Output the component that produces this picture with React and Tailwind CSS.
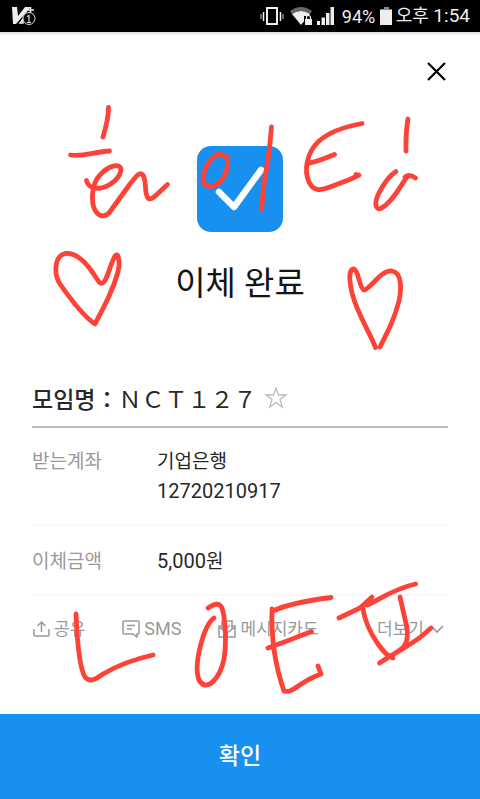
const koreanFont = "font-['Roboto','Noto_Sans_CJK_KR',sans-serif]";

function VaccineIcon() {
  return (
    <svg className="h-6 w-7" viewBox="0 0 28 24" fill="none" aria-hidden="true">
      <path d="M0 3h5l1 9 7-9h6L4 20H1L0 3Z" fill="#eee" />
      <path d="M15 6h7M18.500 3v6M8 19l3-4v4Z" stroke="#eee" strokeWidth="1.500" />
      <circle cx="17" cy="14.500" r="6" fill="#000" stroke="#ddd" />
      <path d="m15 12.500 2-1v7M15 18.500h4" stroke="#ddd" strokeWidth="1.200" />
    </svg>
  );
}

function VibrateIcon() {
  return (
    <svg className="h-6 w-6" viewBox="0 0 24 24" fill="none" stroke="#eee" aria-hidden="true">
      <path d="M7 4h10v16H7Z" strokeWidth="2" />
      <path d="M3.500 8v9M20.500 8v9" strokeWidth="1.500" />
      <path d="M1 10v5M23 10v5" stroke="#aaa" strokeWidth="1.200" />
    </svg>
  );
}

function WifiIcon() {
  return (
    <svg className="h-6 w-6" viewBox="0 0 24 24" aria-hidden="true">
      <path d="M0 7q11-8 22 0l-2 3q-9-6-18 0Z" fill="#666" />
      <path d="M2 10q9-6 18 0l-9 11Z" fill="#eee" />
      <path d="M14 12h9v10h-9Z" fill="#000" />
      <path d="M15 15h7v6h-7Z" fill="#eee" />
      <path d="M16.500 15v-1.500a2 2 0 0 1 4 0V15" fill="none" stroke="#eee" strokeWidth="1.200" />
    </svg>
  );
}

function SignalIcon() {
  return (
    <svg className="h-6 w-5" viewBox="0 0 20 24" fill="#eee" aria-hidden="true">
      <path d="M1 17h3v4H1ZM5.500 13.500H9V21H5.500ZM10 9h3.500v12H10ZM14.500 3H18v18h-3.500Z" />
    </svg>
  );
}

function BatteryIcon() {
  return (
    <svg className="h-6 w-3" viewBox="0 0 12 24" aria-hidden="true">
      <path d="M4 3h5v2h3v2H0V5h4Z" fill="#888" />
      <path d="M0 6h12v15H0Z" fill="#eee" />
    </svg>
  );
}

function Doodle() {
  return (
    <svg
      className="pointer-events-none absolute top-0 left-1/2 h-[799px] w-[480px] -translate-x-1/2"
      viewBox="0 0 480 799"
      fill="none"
      stroke="#ff4238"
      strokeWidth="4.800"
      strokeLinecap="round"
      strokeLinejoin="round"
      aria-hidden="true"
    >
      <path d="M108.500 107.500C108.500 119 106 127 103 137" />
      <path d="M70.500 155C83 157 94 152 109.500 151" />
      <path d="M86.500 180.500C88 187 94 189 101 188C111 186 121 177 121 169C119 162 107 167 100 175C91 184 91 203 95 210C98 216 104 218 109 213L130 184C135 178 139 171 143 175C147 182 144 194 148 198C151 202 159 192 167.500 184.500" />
      <path d="M219.500 153.500C211 156 203 169 203 180C204 188 214 188 220 182C228 173 230 158 225 156C222 154 220 155 219 154" />
      <path d="M271.500 127L269 153L264 183L261.500 209.500" />
      <path d="M362 123.500C343 127 328 133 319 141C306 153 304 171 309 182C313 191 320 191 330 187L351 179L359 175L356 174.500" />
      <path d="M309 163C317 162 326 158 334.500 154.500" />
      <path d="M408 119Q405.500 134 406 151" />
      <path d="M396 171.500C386 178 374 198 376 206C378 212 384 207 388 203C397 194 401 185 407 177M405 177Q409 173.500 415.500 178" />
      <path d="M95 324C82 315 69 297 60 284C53 273 55 256 65 253.500C78 252 88 266 93 273L99 282C106 289 109 266 115 256C119 251 120 264 118 272C113 290 105 305 95 324Z" />
      <path d="M375.500 347.500C369 331 357 313 352 293C348 275 350 269 354 269C359 271 359 288 364 290C370 290 380 270 392 271C403 273 401 291 399 301C394 320 388 331 380 347" />
      <path d="M76 614C77 638 79 667 85 677C90 683 96 679 103 674C120 664 135 659 153 655" />
      <path d="M214 618C204 625 193 664 199 680C206 693 220 679 224 659C227 641 225 617 222 608C219 602 214 604 208 608" />
      <path d="M331 597.500C311 600 288 604 273 611M272 609C271 638 276 668 284 691C293 694 298 682 321 674L318 666M268 648L287 641L311.500 631.500" />
      <path d="M339 618L360 608L372 597M367 605C379 600 393 589 415.500 584M363 609C365 622 371 634 378 644C386 655 388 655 393 658M400 597L407 628C409 644 404 648 394 654L379.500 663C397 651 410 646 423 635L431 628" />
    </svg>
  );
}

function DetailRow({ label, children }) {
  return (
    <div className="flex items-baseline border-b-2 border-[#f7f7f7] text-[19px] leading-[30px]">
      <dt className="w-[125px] shrink-0 text-[#999]">{label}</dt>
      <dd className="text-[#282828]">{children}</dd>
    </div>
  );
}

export default function App() {
  return (
    <div className={`relative flex min-h-screen flex-col overflow-hidden bg-white ${koreanFont}`}>
      <header className="flex h-8 items-center bg-black px-3 text-[18px] text-[#eee]">
        <VaccineIcon />
        <div className="-mr-0.5 ml-auto flex items-center">
          <VibrateIcon />
          <span className="ml-1.5"><WifiIcon /></span>
          <span className="ml-0.5"><SignalIcon /></span>
          <span className="ml-1.5 w-9">94%</span>
          <span className="ml-0.5"><BatteryIcon /></span>
          <time className="ml-1">오후 <span className="text-[19px]">1:54</span></time>
        </div>
      </header>
      <div className="h-1 bg-linear-to-b from-[#ddd] to-white" />
      <main className="flex grow flex-col px-8">
        <button type="button" aria-label="닫기" className="mt-[23px] size-6 self-end">
          <svg viewBox="0 0 24 24" fill="none" stroke="#000" strokeWidth="2.200">
            <path d="m4 4 17 17M21 4 4 21" />
          </svg>
        </button>
        <div className="mt-[63px] flex flex-col items-center">
          <svg className="size-[86px]" viewBox="0 0 86 86" fill="none" aria-hidden="true">
            <rect width="86" height="86" rx="14" fill="#1790ef" />
            <path d="m22 46 15 15 27-37" stroke="#fff" strokeWidth="6.500" strokeLinecap="round" strokeLinejoin="round" />
          </svg>
          <h1 className="mt-[28px] text-[33px] leading-[48px] text-[#151515]">이체 완료</h1>
        </div>
        <div className="mt-[74px] flex h-[46px] items-start border-b-2 border-[#bebebe] text-[23px] leading-[32px] text-[#282828]">
          <h2 className="font-['Noto_Sans_CJK_KR',sans-serif]">
            <strong className="font-medium">모임명：</strong>ＮＣＴ１２７
          </h2>
          <button type="button" aria-label="즐겨찾기" className="ml-2 h-8">
            <svg className="size-6" viewBox="0 0 24 24" fill="none" stroke="#bbb" strokeWidth="1.300">
              <path d="m12 2 2.500 7H22l-6 4.500 2.200 7.500-6.200-4.500L5.800 21 8 13.500 2 9h7.500Z" />
            </svg>
          </button>
        </div>
        <dl className="flex flex-col">
          <div className="pt-[19px]">
            <DetailRow label="받는계좌">
              <div>기업은행</div>
              <div className="pb-[19px] text-[20px] leading-[28px]">12720210917</div>
            </DetailRow>
          </div>
          <div className="pt-5">
            <DetailRow label="이체금액">
              <div className="pb-[17px]"><span className="text-[20px]">5,000</span>원</div>
            </DetailRow>
          </div>
        </dl>
        <div className="mt-[19px] mb-[71px] flex items-center gap-[37px] pr-0.5 text-[17px] leading-[28px] text-[#999]">
          <button type="button" className="flex items-center gap-1">
            <svg className="size-[18px]" viewBox="0 0 18 18" fill="none" stroke="#999" strokeWidth="1.500">
              <path d="M2 9v6q0 1 1 1h13q1 0 1-1V9M9.500 12V2M5.500 6l4-4 4 4" />
            </svg>
            공유
          </button>
          <button type="button" className="flex items-center gap-1">
            <svg className="size-[18px]" viewBox="0 0 18 18" fill="none" stroke="#999" strokeWidth="1.500">
              <path d="M2 1h14q1 0 1 1v11q0 1-1 1h-1v3l-4-3H2q-1 0-1-1V2q0-1 1-1ZM5 5.500h8M5 9h5" />
            </svg>
            <span className="text-[18px]">SMS</span>
          </button>
          <button type="button" className="flex items-center gap-1">
            <svg className="size-[18px]" viewBox="0 0 18 18" fill="none" stroke="#999" strokeWidth="1.500">
              <path d="M4 6H1v11h16V6h-3M4 9V1h10v8M1 7l8 6 8-6M6 5l3 3 3-3" />
            </svg>
            메시지카드
          </button>
          <button type="button" className="ml-auto flex items-center gap-1">
            더보기
            <svg className="size-[18px]" viewBox="0 0 18 18" fill="none" stroke="#999" strokeWidth="1.700">
              <path d="m3 6 6 6 6-6" />
            </svg>
          </button>
        </div>
      </main>
      <button type="button" className="h-[86px] bg-[#1790ef] text-[23px] font-medium text-white">확인</button>
      <Doodle />
    </div>
  );
}
